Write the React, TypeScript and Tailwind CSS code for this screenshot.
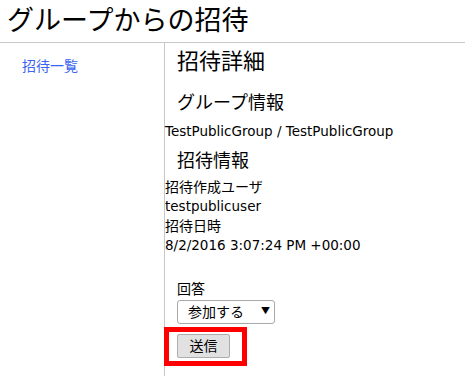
export default function App() {
  const details = [
    { label: "招待作成ユーザ", value: "testpublicuser" },
    { label: "招待日時", value: "8/2/2016 3:07:24 PM +00:00" },
  ]

  return (
    <div className="h-screen flex flex-col bg-white text-black font-['Open_Sans','Noto_Sans_CJK_JP',sans-serif]">
      {/* Header */}
      <header className="h-[43px] shrink-0 border-b border-[#c8c8c8] pl-[7px]">
        <h1 className="text-[27px] leading-[40px] font-normal">グループからの招待</h1>
      </header>

      <div className="flex flex-1">
        {/* Sidebar */}
        <aside className="w-[165px] shrink-0 border-r border-[#c8c8c8] pt-[10px] pl-[22px]">
          <a href="#" className="text-[14px] leading-[20px] text-[#3c64f0]">
            招待一覧
          </a>
        </aside>

        {/* Detail */}
        <main className="flex-1">
          <h2 className="mt-[2px] ml-3 text-[22px] leading-[30px] font-normal">招待詳細</h2>

          <h3 className="mt-[14px] ml-3 text-[18px] leading-[26px] font-normal">グループ情報</h3>
          <p className="mt-[6px] text-[13.5px] leading-[20px] font-['DejaVu_Sans','Noto_Sans_CJK_JP',sans-serif]">
            TestPublicGroup / TestPublicGroup
          </p>

          <h3 className="mt-[6px] ml-3 text-[18px] leading-[26px] font-normal">招待情報</h3>
          <dl className="mt-[5px] text-[14px]">
            {details.map((d) => (
              <div key={d.label}>
                <dt className="leading-[17px]">{d.label}</dt>
                <dd className="leading-[22px] text-[13.5px] font-['DejaVu_Sans','Noto_Sans_CJK_JP',sans-serif]">
                  {d.value}
                </dd>
              </div>
            ))}
          </dl>

          <div className="mt-[24px] ml-3">
            <label className="block text-[14px] leading-[17px]">回答</label>
            <div className="relative mt-[2px] w-[98px]">
              <select className="appearance-none w-full h-[24px] border border-[#a9a9a9] rounded-[3px] bg-white pl-[10px] text-[14px] leading-[20px] outline-none">
                <option>参加する</option>
                <option>参加しない</option>
              </select>
              <span className="pointer-events-none absolute right-[5px] top-[5px] text-[9px] leading-[14px]">▼</span>
            </div>
          </div>

          <div className="mt-[3px] -ml-px inline-block border-[5px] border-[#ff0000] pl-[8px] pr-[12px] pt-[2px] pb-[3px]">
            <button className="block w-[53px] h-[24px] border border-[#adadad] rounded-[2px] bg-[#e1e1e1] text-[14px] leading-[20px]">
              送信
            </button>
          </div>
        </main>
      </div>
    </div>
  )
}
